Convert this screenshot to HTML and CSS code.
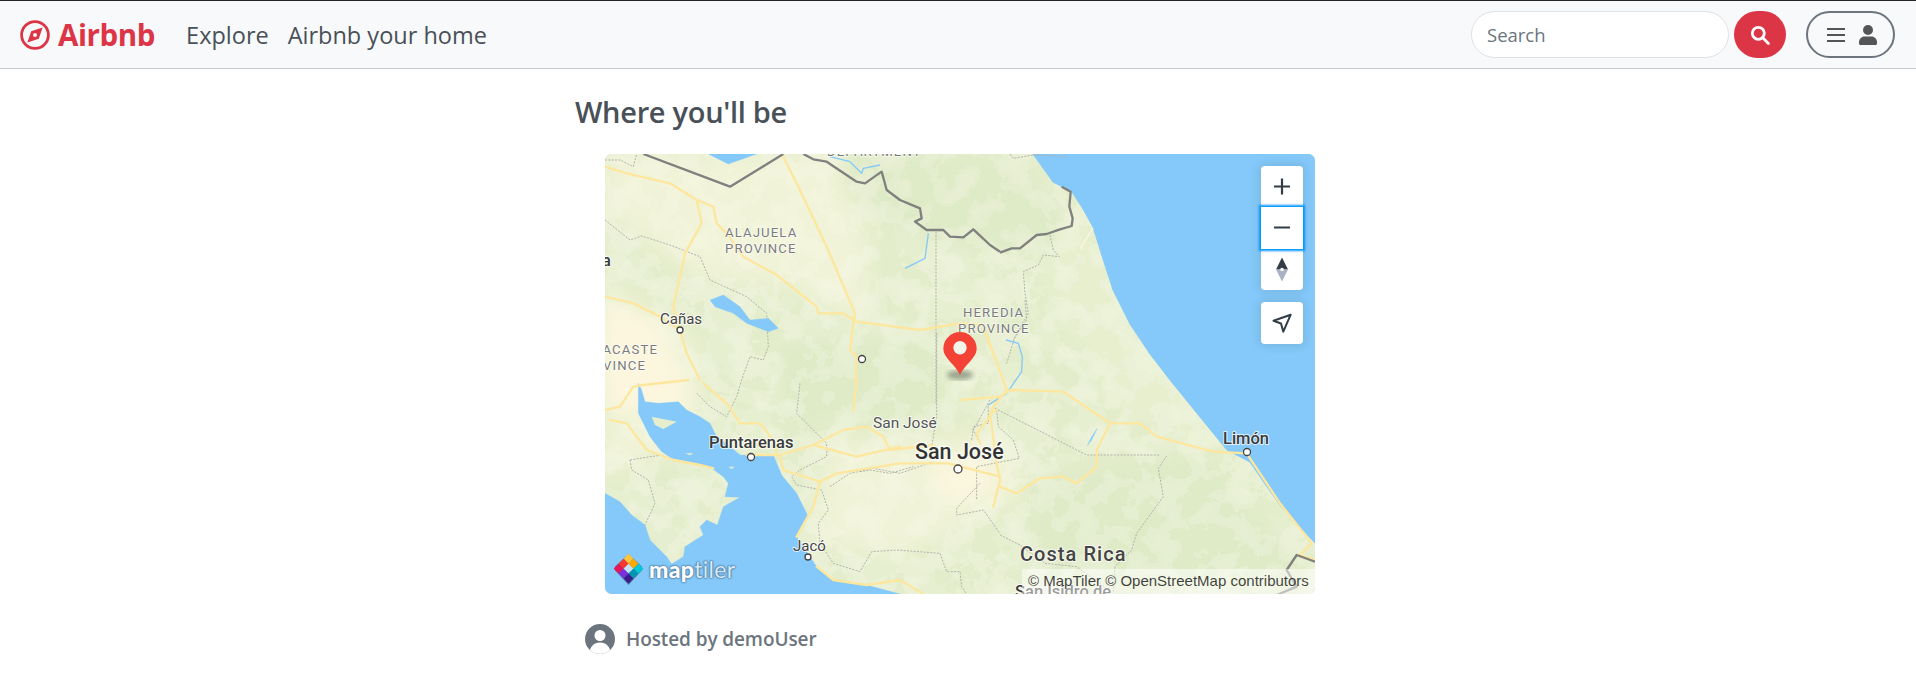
FILE: index.html
```html
<!DOCTYPE html>
<html lang="en">
<head>
<meta charset="utf-8">
<title>Airbnb</title>
<link rel="stylesheet" href="styles.css">
</head>
<body>
<nav class="navbar">
  <a class="brand" href="#">
    <svg class="brand-icon" viewBox="0 0 30 30"><circle cx="15" cy="15" r="13.4" fill="none" stroke="#dc3545" stroke-width="2.8"/><path fill="#dc3545" fill-rule="evenodd" d="M22.6 7.4 18.8 18.8 7.4 22.6 11.2 11.2ZM15 13a2 2 0 1 0 0 4 2 2 0 0 0 0-4Z"/></svg>
    <span>Airbnb</span>
  </a>
  <div class="nav-links">
    <a href="#">Explore</a>
    <a href="#">Airbnb your home</a>
  </div>
  <form class="search">
    <input class="search-input" type="text" placeholder="Search">
    <button class="search-btn" type="button" aria-label="Search">
      <svg viewBox="0 0 20 20" width="20" height="20"><circle cx="8.3" cy="8.3" r="6" fill="none" stroke="#fff" stroke-width="2.8"/><path d="M12.8 12.8 18.4 18.4" stroke="#fff" stroke-width="2.8" stroke-linecap="round"/></svg>
    </button>
  </form>
  <button class="menu-btn" type="button" aria-label="Menu">
    <svg viewBox="0 0 18 16" width="18" height="16"><path d="M0 2h18M0 8h18M0 14h18" stroke="#555" stroke-width="2.2"/></svg>
    <svg viewBox="0 0 18 20" width="18" height="20"><circle cx="9" cy="5" r="5" fill="#555"/><path fill="#555" d="M5.5 11.5h7c3 0 5.5 2.5 5.5 5.5v1.5c0 .8-.7 1.5-1.5 1.5h-15C.7 20 0 19.300 0 18.500V17c0-3 2.500-5.500 5.500-5.500Z"/></svg>
  </button>
</nav>

<main class="content">
  <h2 class="title">Where you'll be</h2>
  <div class="map">
    <svg class="map-canvas" viewBox="0 0 710 440" width="710" height="440">
      <defs>
        <filter id="mottle-light" x="0" y="0" width="100%" height="100%">
          <feTurbulence type="fractalNoise" baseFrequency="0.04" numOctaves="4" seed="7"/>
          <feColorMatrix type="matrix" values="0 0 0 0 .94  0 0 0 0 .95  0 0 0 0 .84  1 0 0 0 0"/>
          <feComponentTransfer><feFuncA type="discrete" tableValues="0 0 0 0 .5 .7 .7 .7"/></feComponentTransfer>
        </filter>
        <filter id="mottle-dark" x="0" y="0" width="100%" height="100%">
          <feTurbulence type="fractalNoise" baseFrequency="0.03" numOctaves="3" seed="21"/>
          <feColorMatrix type="matrix" values="0 0 0 0 .86  0 0 0 0 .91  0 0 0 0 .77  0 1 0 0 0"/>
          <feComponentTransfer><feFuncA type="discrete" tableValues="0 0 0 0 .6 .8 .8 .8"/></feComponentTransfer>
        </filter>
        <filter id="soft"><feGaussianBlur stdDeviation="9"/></filter>
        <filter id="pin-shadow"><feGaussianBlur stdDeviation="2.500"/></filter>
      </defs>

      <rect class="land" width="710" height="440"/>
      <rect width="710" height="440" filter="url(#mottle-dark)" class="mottle-d"/>
      <g filter="url(#soft)">
        <polygon class="tone-light" points="0,0 235,0 262,90 262,170 180,130 100,125 0,60"/>
        <polygon class="tone-light" points="0,130 90,190 95,290 0,320"/>
        <polygon class="tone-light" points="225,290 400,280 420,340 300,400 210,390"/>
        <polygon class="tone-dark" points="240,0 400,0 470,75 430,100 320,85 240,40"/>
        <polygon class="tone-dark" points="165,190 330,180 345,270 230,265 190,285"/>
        <polygon class="tone-dark" points="420,320 600,300 700,420 700,440 430,440"/>
        <polygon class="tone-coast" points="470,40 520,140 620,300 500,240 440,110"/>
      </g>
      <rect width="710" height="440" filter="url(#mottle-light)" class="mottle"/>
      <g filter="url(#soft)">
        <polygon class="tone-cream" points="0,150 50,165 85,240 70,262 0,250"/>
        <ellipse class="tone-cream" cx="358" cy="325" rx="30" ry="18"/>
      </g>

      <polygon class="water" points="428,0 438,14 448,28 467,38 478,55 488,73 498,105 508,136 525,170 545,200 565,226 595,263 622,296 645,308 660,330 675,351 692,370 710,389 710,0"/>

      <!-- Nicoya gulf and Pacific -->
      <g transform="translate(-5 226) scale(.33333)">
        <path class="water" d="M15 642V340L60 365 95 405 135 435 150 480 200 530 215 552 250 530 255 500 310 465 300 440 320 420 352 435 370 380 420 352 375 350 385 310 370 290 335 265 285 250 215 235 185 215 150 170 115 100 115 10 125 30 135 65 175 70 235 65 260 90 300 110 330 130 350 170 385 195 420 225 520 225 545 285 590 340 625 410 590 470 650 560 700 600 800 615 900 642Z"/>
        <path class="isle" d="M155 110 230 125 190 147 165 135Z"/>
        <path class="isle" d="M255 220h25l-10 6ZM385 260h20l-10 7Z"/>
      </g>

      <!-- borders (dashed) -->
      <g class="dash" transform="translate(-5 -4) scale(.33333)">
        <path d="M15 210 90 270 125 258 210 285 300 320 330 390 440 440 500 490 505 590 490 630 450 620 425 690"/>
        <path d="M1008 245V760"/>
        <path d="M15 30 60 30 100 50 110 12"/>
      </g>
      <g class="dash" transform="translate(255 146) scale(.33333)">
        <path d="M230 100V350L215 440"/>
        <path d="M495 0 500 60 460 120"/>
        <path d="M440 280 385 315 385 370 340 380 335 420"/>
        <path d="M405 325 680 465H900"/>
        <path d="M410 330 415 380 460 420 478 475 350 500 350 600"/>
        <path d="M0 515 30 510 90 520 160 500"/>
      </g>
      <g class="dash" transform="translate(395 -4) scale(.33333)">
        <path d="M150 255 160 300 178 320 130 315 115 345 70 365 75 430 85 490 45 560 20 640"/>
        <path d="M30 12 40 25 100 15 200 20"/>
      </g>
      <g class="dash" transform="translate(395 226) scale(.33333)">
        <path d="M500 228 475 265 490 350 410 460 395 510 345 560 340 640"/>
        <path d="M0 465 60 495 135 550 230 560 340 640"/>
      </g>
      <g class="dash" transform="translate(-5 226) scale(.33333)">
        <path d="M290 40 330 80 380 110 410 50 425 0"/>
        <path d="M600 10 590 100 680 190 680 230 600 270 575 290 590 315 665 330 685 390 655 430 660 490 700 550 780 575 815 515 890 510 1020 520 1040 575 1080 575 1085 620 1100 642"/>
        <path d="M690 320 750 280 820 265 900 280 1000 245"/>
        <path d="M1170 60 1120 150 1140 190"/>
        <path d="M1140 310 1070 385 1070 405 1150 390 1200 460"/>
        <path d="M90 240 150 230 190 225M90 240 95 270 145 300 165 370 135 435"/>
      </g>

      <!-- rivers and lakes -->
      <g transform="translate(-5 -4) scale(.33333)">
        <path class="water" d="M330 450 370 435 420 470 450 510 505 505 535 535 505 545 440 520 400 490 345 470Z"/>
        <path class="water" d="M325 12 385 42 470 12Z"/>
        <path class="river" d="M690 20 750 35 785 70 790 55 840 45"/>
        <path class="river" d="M985 250 975 325 915 355"/>
      </g>
      <g transform="translate(255 146) scale(.33333)">
        <path class="river" d="M438 120 475 130 487 170 485 215 440 280 385 315"/>
        <path class="water" d="M712 385 695 410 682 436 695 420Z"/>
      </g>

      <!-- roads -->
      <g class="road" transform="translate(-5 -4) scale(.33333)">
        <path d="M15 50 80 70 210 100 290 150 340 170 350 220 380 250 430 320 530 375 650 470 655 490 730 490 770 515 960 540 1080 520 1150 525 1170 590"/>
        <path d="M290 150 305 220 255 310 220 470 240 540 260 610 300 690"/>
        <path d="M550 20 600 120 680 290 765 490 750 600 770 620 765 690"/>
        <path d="M15 440 100 460 180 500 240 540"/>
      </g>
      <g class="road" transform="translate(255 146) scale(.33333)">
        <path d="M380 105 440 270 400 320 390 350 350 400 360 430"/>
      </g>
      <g class="road" transform="translate(-5 226) scale(.33333)">
        <path d="M15 90 60 80 100 20 130 15 265 0"/>
        <path d="M30 120 80 130 140 210 220 240 300 255 340 265"/>
        <path d="M310 10 385 75 420 130 480 130 520 180 530 220"/>
        <path d="M440 225 540 225 640 195 730 150 800 140 850 170 870 210 1000 195"/>
        <path d="M540 230 550 270 660 305 640 380 590 470"/>
        <path d="M660 305 710 280 900 250 1045 250 1200 290"/>
        <path d="M640 195 770 230 900 200"/>
        <path d="M770 0 760 90M650 560 700 600 800 615 900 600 970 642"/>
        <path d="M1190 90 1170 100 1190 250 1200 300 1180 380"/>
      </g>
      <g class="road" transform="translate(395 226) scale(.33333)">
        <path d="M-120 60 0 50 30 30 190 35 330 130 420 130 470 170 640 215 740 220 840 370 935 490 900 525 945 540"/>
        <path d="M330 130 290 210 290 260 230 310 190 290 120 295 50 340 0 320"/>
      </g>
      <path class="cream-line" d="M488 74 475 95"/>

      <!-- country border -->
      <g class="country" transform="translate(-5 -4) scale(.33333)">
        <path d="M130 12 390 110 550 12"/>
        <path d="M610 12 640 28 680 35 770 95 795 100 845 65 860 120 900 150 960 175 965 205 945 215 980 240 1030 240 1050 260 1090 262 1120 238 1170 285 1200 305"/>
      </g>
      <g class="country" transform="translate(395 -4) scale(.33333)">
        <path d="M0 308 35 295 60 295 110 255 140 252 180 238 215 228 218 205 208 170 212 125 185 110"/>
      </g>
      <g class="country" transform="translate(395 226) scale(.33333)">
        <path d="M945 545 890 525 860 570 890 620 830 645"/>
      </g>

      <!-- labels -->
      <g class="label-region">
        <text x="222" y="2">DEPARTMENT</text>
        <text x="120" y="83">ALAJUELA</text>
        <text x="120" y="99">PROVINCE</text>
        <text x="53" y="200" text-anchor="end">GUANACASTE</text>
        <text x="41" y="216" text-anchor="end">PROVINCE</text>
        <text x="358" y="163">HEREDIA</text>
        <text x="353" y="179">PROVINCE</text>
      </g>
      <text class="label-town label-gray" x="268" y="274">San José</text>
      <text class="label-town" x="55" y="170">Cañas</text>
      <text class="label-town" x="188" y="397">Jacó</text>
      <text class="label-city" x="6" y="112" text-anchor="end">Liberia</text>
      <text class="label-city" x="104" y="294">Puntarenas</text>
      <text class="label-city" x="618" y="290">Limón</text>
      <text class="label-capital" x="310" y="305">San José</text>
      <text class="label-country" x="415" y="407">Costa Rica</text>
      <text class="label-city" x="410" y="443">San Isidro de</text>

      <g class="dot">
        <circle cx="75" cy="176" r="3"/>
        <circle cx="257" cy="205" r="3.500"/>
        <circle cx="146" cy="303" r="3.500"/>
        <circle cx="203" cy="403" r="3"/>
        <circle cx="642" cy="298" r="3.500"/>
        <circle cx="353" cy="315" r="4"/>
      </g>

      <!-- marker -->
      <ellipse class="pin-shadow" cx="355" cy="221" rx="13" ry="5" filter="url(#pin-shadow)"/>
      <path class="pin" d="M355 221C351 211 338.300 204 338.300 194.700A16.700 16.700 0 0 1 371.700 194.700C371.700 204 359 211 355 221Z"/>
      <circle class="pin-hole" cx="355" cy="193.700" r="6.700"/>
    </svg>

    <div class="controls">
      <div class="ctrl-group">
        <button class="ctrl" type="button" aria-label="Zoom in"><svg viewBox="0 0 42 41" width="42" height="41"><path d="M13 20.500h16M21 12.500v16" class="ctrl-stroke"/></svg></button>
        <button class="ctrl ctrl-focus" type="button" aria-label="Zoom out"><svg viewBox="0 0 42 41" width="42" height="41"><path d="M13 20.500h16" class="ctrl-stroke"/></svg></button>
        <button class="ctrl" type="button" aria-label="Reset bearing"><svg viewBox="0 0 42 41" width="42" height="41"><path fill="#333c47" d="M21 8.500 27 20.500H15Z"/><path fill="#aab3c3" d="M21 32.500 27 20.500H15Z"/><circle cx="21" cy="20.500" r="1.800" fill="#fff"/></svg></button>
      </div>
      <div class="ctrl-group">
        <button class="ctrl" type="button" aria-label="Find my location"><svg viewBox="0 0 42 42" width="42" height="42"><path d="M12.500 18.800 29.700 12.700 22.300 29.700 20 21.500Z" fill="none" stroke="#333c47" stroke-width="2" stroke-linejoin="round"/></svg></button>
      </div>
    </div>

    <div class="logo">
      <svg viewBox="-16 -18 32 36" width="29" height="33">
        <path d="M0 -17 14.500 -3.500Q16 -1 14.500 1.500L0 17 -14.500 1.500Q-16 -1 -14.500 -3.500Z" fill="#5a7e9e"/>
        <g transform="translate(0 -1) rotate(45)">
          <rect x="-11.500" y="-11.500" width="7.700" height="7.700" fill="#ffc53a"/>
          <rect x="-3.800" y="-11.500" width="7.700" height="7.700" fill="#ffa800"/>
          <rect x="3.900" y="-11.500" width="7.700" height="7.700" fill="#00c8d8"/>
          <rect x="-11.500" y="-3.800" width="7.700" height="7.700" fill="#f9372c"/>
          <rect x="-3.800" y="-3.800" width="7.700" height="7.700" fill="#c7e4f7"/>
          <rect x="3.900" y="-3.800" width="7.700" height="7.700" fill="#0097b5"/>
          <rect x="-11.500" y="3.900" width="7.700" height="7.700" fill="#e5165a"/>
          <rect x="-3.800" y="3.900" width="7.700" height="7.700" fill="#7a2fe0"/>
          <rect x="3.900" y="3.900" width="7.700" height="7.700" fill="#3a1c8c"/>
        </g>
      </svg>
      <span class="logo-text"><b>map</b>tiler</span>
    </div>

    <div class="attrib">© MapTiler © OpenStreetMap contributors</div>
  </div>

  <div class="host">
    <svg viewBox="0 0 30 30" width="30" height="30"><defs><clipPath id="avatar"><circle cx="15" cy="15" r="15"/></clipPath></defs><circle cx="15" cy="15" r="15" fill="#6c757d"/><g clip-path="url(#avatar)" fill="#fff"><circle cx="15" cy="11.500" r="5.500"/><path d="M4.500 30c0-7 4-11.500 10.500-11.500S25.500 23 25.500 30Z"/></g></svg>
    <span>Hosted by demoUser</span>
  </div>
</main>
</body>
</html>
```

FILE: styles.css
```css
* { box-sizing: border-box; }
html, body { margin: 0; padding: 0; background: #fff; }
body { font-family: "Open Sans", "Noto Sans", sans-serif; color: #495057; overflow: hidden; }
a { text-decoration: none; color: inherit; }
button { font: inherit; cursor: pointer; }

.navbar {
  display: flex; align-items: center;
  height: 69px; padding: 0 21px 0 20px;
  background: #f8f9fa;
  border-top: 1px solid #212529; border-bottom: 1px solid #c8c9ca;
}
.brand { display: flex; align-items: center; gap: 8px; color: #dc3545; font-size: 29.500px; font-weight: 700; letter-spacing: -.4px; }
.brand-icon { width: 30px; height: 30px; }
.nav-links { display: flex; gap: 19px; margin-left: 31px; font-size: 23.500px; color: #495057; }
.search { display: flex; gap: 5px; margin-left: auto; }
.search-input {
  width: 258px; height: 47px; padding: 0 15px;
  border: 1px solid #dee2e6; border-radius: 24px; background: #fff;
  font: 400 18.500px "Open Sans", sans-serif; color: #495057; outline: none;
}
.search-input::placeholder { color: #6c757d; opacity: 1; }
.search-btn {
  display: flex; align-items: center; justify-content: center;
  width: 52px; height: 47px; padding: 0; border: 0; border-radius: 24px; background: #dc3545;
}
.menu-btn {
  display: flex; align-items: center; justify-content: center; gap: 14px;
  width: 89px; height: 47px; margin-left: 20px; padding: 0 0 0 2px;
  border: 2px solid #6c757d; border-radius: 24px; background: transparent;
}

.content { width: 766px; margin: 0 auto; }
.title { margin: 0; padding: 22px 0 22px; font-size: 29px; line-height: 41px; font-weight: 600; color: #495057; letter-spacing: -.3px; }

.map { position: relative; width: 710px; height: 440px; margin-left: 30px; border-radius: 7px; overflow: hidden; background: #84c9f9; }
.map-canvas { display: block; }
.land { fill: #e4edcb; }
.mottle { opacity: .45; }
.mottle-d { opacity: .32; }
.tone-light { fill: #f0f3d7; }
.tone-dark { fill: #dfeac7; }
.tone-coast { fill: #e7efcf; }
.tone-cream { fill: #fcf6de; }
.water { fill: #84c9f9; stroke: #84c9f9; stroke-width: 1; stroke-linejoin: round; }
.isle { fill: #e6eece; }
.river { fill: none; stroke: #84c9f9; stroke-width: 4; stroke-linejoin: round; }
.dash { fill: none; stroke: #b1b2ab; stroke-width: 3; stroke-dasharray: 6 4; stroke-linejoin: round; }
.road { fill: none; stroke: #fde79e; stroke-width: 7; stroke-linejoin: round; stroke-linecap: round; }
.cream-line { fill: none; stroke: #faf5dc; stroke-width: 1.500; }
.country { fill: none; stroke: #80807e; stroke-width: 7; stroke-linejoin: round; }

.label-region text, .label-town, .label-city, .label-capital, .label-country {
  font-family: Roboto, "Liberation Sans", sans-serif;
  paint-order: stroke; stroke: rgba(255,255,255,.75); stroke-linejoin: round;
}
.label-region text { font-size: 13.200px; font-weight: 400; fill: #7b7b7b; letter-spacing: 1.100px; stroke-width: 1.500px; }
.label-town { font-size: 15px; fill: #444; stroke-width: 2px; }
.label-gray { fill: #555; font-size: 15.500px; }
.label-city { font-size: 16.500px; font-weight: 500; fill: #3a3a3a; stroke-width: 2px; }
.label-capital { font-size: 21.500px; font-weight: 500; fill: #333; stroke-width: 2.500px; }
.label-country { font-size: 20px; font-weight: 500; fill: #444; letter-spacing: 1.050px; stroke-width: 2px; }
.dot circle { fill: #fff; stroke: #444; stroke-width: 1.300; }
.pin { fill: #f44336; }
.pin-hole { fill: #f3f4ea; }
.pin-shadow { fill: #4c5a44; opacity: .5; }

.controls { position: absolute; top: 12px; right: 12px; display: flex; flex-direction: column; gap: 12px; }
.ctrl-group { display: flex; flex-direction: column; width: 42px; border-radius: 4px; background: #fff; box-shadow: 0 0 10px 2px rgba(0,0,0,.1); }
.ctrl { display: block; position: relative; width: 42px; height: 41.330px; padding: 0; border: 0; background: transparent; border-radius: 4px; }
.ctrl:last-child:first-child { height: 42px; }
.ctrl svg { display: block; }
.ctrl-stroke { fill: none; stroke: #333c47; stroke-width: 2.200; }
.ctrl-focus { border-radius: 0; background: #fff; box-shadow: 0 0 2px 2px #0096ff; z-index: 1; }

.logo { position: absolute; left: 9px; bottom: 8px; display: flex; align-items: center; gap: 6px; }
.logo-text { font-family: Lato, "Open Sans", sans-serif; font-size: 23px; line-height: 1; font-weight: 400; color: #d6e9f7; letter-spacing: .3px; text-shadow: 0 0 2px #466d90, 0 0 2px #466d90, 0 0 1px #466d90; }
.logo-text b { font-weight: 900; color: #fff; }

.attrib {
  position: absolute; right: 0; bottom: 0; height: 25px; width: 293px; padding: 2px 0 0 6px;
  background: rgba(255,255,255,.5); color: rgba(0,0,0,.75);
  font: 15px/20px "Liberation Sans", Arial, sans-serif; white-space: nowrap;
}

.host { display: flex; align-items: center; gap: 11px; margin: 30px 0 0 10px; font-size: 19px; font-weight: 600; color: #6c757d; letter-spacing: -.1px; }
```
